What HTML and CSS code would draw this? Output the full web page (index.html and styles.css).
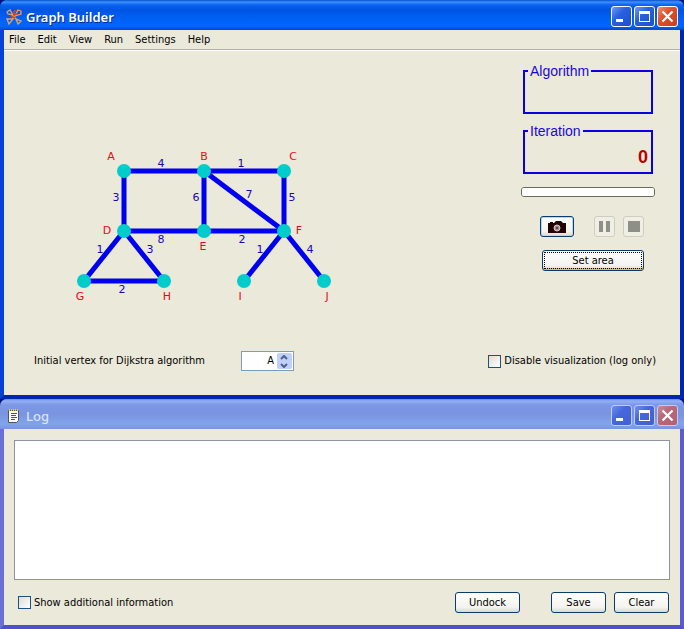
FILE: index.html
```html
<!DOCTYPE html>
<html lang="en">
<head>
  <meta charset="UTF-8" />
  <meta name="viewport" content="width=device-width, initial-scale=1.0"/>
  <title>Graph Builder</title>
  <link rel="stylesheet" href="styles.css">
</head>
<body>
  <section class="window main-window">
    <header class="titlebar">
      <svg class="title-icon" viewBox="0 0 16 16" fill="none" stroke="#e0a468" stroke-width="1.3">
        <path d="M1 3l3-2 3 5-5-1zM15 2l-3-1-3 6 6-2zM1 10l2 5 4-5zM10 10l2 5 3-3zM6 6l5 5M10 6l-4 4"/>
        <path stroke="#d84520" stroke-width="1.6" d="M8 2h3M8 2v4l3-1M5 7l4 2"/>
      </svg>
      <h1>Graph Builder</h1>
      <div class="window-buttons">
        <button class="win-btn" aria-label="Minimize"><svg viewBox="0 0 19 19"><path fill="#fff" d="M4 12h7v3H4z"/></svg></button>
        <button class="win-btn" aria-label="Maximize"><svg viewBox="0 0 19 19"><path fill="#fff" fill-rule="evenodd" d="M4 4h11v11H4zM5 7v7h9V7z"/></svg></button>
        <button class="win-btn close" aria-label="Close"><svg viewBox="0 0 19 19"><path stroke="#fff" stroke-width="2.2" d="M4.500 4.500l10 10M14.500 4.500l-10 10"/></svg></button>
      </div>
    </header>

    <nav class="menu">
      <button>File</button>
      <button>Edit</button>
      <button>View</button>
      <button>Run</button>
      <button>Settings</button>
      <button>Help</button>
    </nav>

    <main class="workspace">
      <svg class="graph" width="280" height="170" viewBox="64 140 280 170">
        <g class="edges">
          <path d="M124 171H284M124 171V231M204 171V231M284 171V231M124 231H284"/>
          <path d="M204 171L284 231M124 231L84 281H164L124 231M284 231L244 281M284 231L324 281"/>
        </g>
        <g class="nodes">
          <circle cx="124" cy="171" r="7"/>
          <circle cx="204" cy="171" r="7"/>
          <circle cx="284" cy="171" r="7"/>
          <circle cx="124" cy="231" r="7"/>
          <circle cx="204" cy="231" r="7"/>
          <circle cx="284" cy="231" r="7"/>
          <circle cx="84" cy="281" r="7"/>
          <circle cx="164" cy="281" r="7"/>
          <circle cx="244" cy="281" r="7"/>
          <circle cx="324" cy="281" r="7"/>
        </g>
        <g class="names">
          <text x="111" y="160">A</text>
          <text x="204" y="160">B</text>
          <text x="293" y="160">C</text>
          <text x="107" y="234">D</text>
          <text x="203" y="250">E</text>
          <text x="299" y="234">F</text>
          <text x="80" y="300">G</text>
          <text x="167" y="300">H</text>
          <text x="240" y="300">I</text>
          <text x="327" y="300">J</text>
        </g>
        <g class="weights">
          <text x="161" y="167">4</text>
          <text x="241" y="167">1</text>
          <text x="116" y="201">3</text>
          <text x="196" y="201">6</text>
          <text x="249" y="198">7</text>
          <text x="292" y="201">5</text>
          <text x="161" y="243">8</text>
          <text x="242" y="243">2</text>
          <text x="100" y="253">1</text>
          <text x="150" y="253">3</text>
          <text x="122" y="293">2</text>
          <text x="260" y="253">1</text>
          <text x="310" y="253">4</text>
        </g>
      </svg>

      <aside class="controls">
        <fieldset>
          <legend>Algorithm</legend>
        </fieldset>
        <fieldset>
          <legend>Iteration</legend>
          <output>0</output>
        </fieldset>
        <progress value="0" max="100" aria-label="Progress"></progress>
        <div class="player">
          <button class="btn camera" aria-label="Take picture">
            <svg width="20" height="14" viewBox="0 0 20 14">
              <path fill="#200404" d="M1 3h2V2h3v1h1l2-2h5l2 2h3v10H1z"/>
              <circle cx="10" cy="8" r="3" fill="#a08c8c" stroke="#d8c8c8"/>
              <circle cx="10" cy="8" r="1" fill="#503030"/>
            </svg>
          </button>
          <button class="btn" aria-label="Pause" disabled>
            <svg width="13" height="13" viewBox="0 0 13 13"><path fill="#8e8f87" d="M1 1h4v11H1zM8 1h4v11H8z"/></svg>
          </button>
          <button class="btn" aria-label="Stop" disabled>
            <svg width="13" height="13" viewBox="0 0 13 13"><path fill="#8e8f87" d="M1 1h12v11H1z"/></svg>
          </button>
        </div>
        <button class="btn set-area">Set area</button>
      </aside>
    </main>

    <div class="options">
      <label for="vertex">Initial vertex for Dijkstra algorithm</label>
      <div class="spinner">
        <input type="text" id="vertex" value="A">
        <div class="arrows">
          <button aria-label="Previous vertex"><svg width="8" height="5" viewBox="0 0 8 5"><path d="M1 4l3-3 3 3"/></svg></button>
          <button aria-label="Next vertex"><svg width="8" height="5" viewBox="0 0 8 5"><path d="M1 1l3 3 3-3"/></svg></button>
        </div>
      </div>
      <label class="check"><input type="checkbox"> Disable visualization (log only)</label>
    </div>
  </section>

  <section class="window log-window">
    <header class="titlebar">
      <svg class="title-icon" viewBox="0 0 16 16">
        <path fill="#fffff4" stroke="#555" d="M2.500 2.500h10v10l-2 2h-8z"/>
        <path stroke="#555" d="M5 5.500h6M5 7.500h5M5 9.500h6M5 11.500h4"/>
        <path stroke="#e0d040" stroke-width="2" stroke-dasharray="1 1" d="M3 2h10"/>
      </svg>
      <h1>Log</h1>
      <div class="window-buttons">
        <button class="win-btn" aria-label="Minimize"><svg viewBox="0 0 19 19"><path fill="#fff" d="M4 12h7v3H4z"/></svg></button>
        <button class="win-btn" aria-label="Maximize"><svg viewBox="0 0 19 19"><path fill="#fff" fill-rule="evenodd" d="M4 4h11v11H4zM5 7v7h9V7z"/></svg></button>
        <button class="win-btn close" aria-label="Close"><svg viewBox="0 0 19 19"><path stroke="#fff" stroke-width="2.2" d="M4.500 4.500l10 10M14.500 4.500l-10 10"/></svg></button>
      </div>
    </header>
    <div class="log-body">
      <textarea aria-label="Log"></textarea>
      <div class="log-footer">
        <label class="check"><input type="checkbox"> Show additional information</label>
        <button class="btn undock">Undock</button>
        <button class="btn">Save</button>
        <button class="btn">Clear</button>
      </div>
    </div>
  </section>
</body>
</html>
```
FILE: styles.css
```css
* {
  box-sizing: border-box;
}

body {
  margin: 0;
  min-height: 100vh;
  display: flex;
  flex-direction: column;
  background-color: #00137f;
  font-family: Tahoma, "DejaVu Sans Condensed", "DejaVu Sans", sans-serif;
  font-size: 11px;
  line-height: 14px;
  color: #000;
}

button, input, textarea {
  font: inherit;
  color: inherit;
}

button {
  padding: 0;
  border: none;
  background: none;
}

/* Windows */
.window {
  display: flex;
  flex-direction: column;
  border: 4px solid #0540d8;
  border-top: none;
  border-color: #0540d8 #0026b0 #0026b0 #0540d8;
  border-radius: 7px 7px 0 0;
  background-color: #ebe9d9;
}

.titlebar {
  display: flex;
  align-items: center;
  height: 30px;
  margin: 0 -4px;
  padding: 3px 6px 0;
  border-radius: 7px 7px 0 0;
  background: linear-gradient(#0a4fc8 0, #3a92ff 2px, #0a62ee 5px, #0054e3 10px, #0062f8 20px, #0066ff 26px, #0048d0 30px);
}

.title-icon {
  width: 16px;
  height: 16px;
  margin-right: 4px;
}

.titlebar h1 {
  flex: 1;
  margin: 0;
  font-family: "Trebuchet MS", "Noto Sans", sans-serif;
  font-size: 13px;
  font-weight: 600;
  color: #fff;
  text-shadow: 1px 1px #0a2a90;
}

.window-buttons {
  display: flex;
  gap: 2px;
}

.win-btn {
  width: 21px;
  height: 21px;
  border: 1px solid #fff;
  border-radius: 3px;
  background: linear-gradient(135deg, #6f9bf5, #2a5fe0 40%, #1c4fd0);
}

.win-btn svg {
  display: block;
}

.win-btn.close {
  background: linear-gradient(135deg, #ee9070, #e0502c 40%, #c8401c);
}

/* Menu */
.menu {
  display: flex;
  gap: 12px;
  height: 20px;
  padding: 0 5px;
  border-bottom: 1px solid #b2b0a2;
  box-shadow: 0 1px #fff;
}

/* Workspace */
.workspace {
  display: flex;
  justify-content: space-between;
  padding: 13px 25px 0 60px;
}

.graph {
  margin-top: 77px;
}

.edges path {
  fill: none;
  stroke: #0000f0;
  stroke-width: 5;
}

.nodes circle {
  fill: #00cccc;
}

.graph text {
  font-family: Verdana, "DejaVu Sans", sans-serif;
  font-size: 11px;
  text-anchor: middle;
}

.names {
  fill: #e80a1a;
}

.weights {
  fill: #1a08b0;
}

.controls {
  width: 134px;
  display: flex;
  flex-direction: column;
}

fieldset {
  height: 51px;
  margin: 0 2px 9px;
  padding: 0 3px;
  border: 2px solid #0a00e0;
}

legend {
  padding: 0 2px;
  font: 14px/16px Arial, "Liberation Sans", sans-serif;
  color: #1a08dc;
}

output {
  display: block;
  text-align: right;
  font: bold 18px/36px Arial, "Liberation Sans", sans-serif;
  color: #b80000;
}

progress {
  appearance: none;
  width: 100%;
  height: 10px;
  margin-top: 4px;
  border: 1px solid #6b6b60;
  border-radius: 3px;
  background-color: #fff;
  overflow: hidden;
}

progress::-webkit-progress-bar {
  background-color: #fff;
}

/* Buttons */
.btn {
  display: flex;
  align-items: center;
  justify-content: center;
  height: 21px;
  border: 1px solid #0a3c6e;
  border-radius: 3px;
  background: linear-gradient(#fff, #f4f3ee 75%, #dcd8cc);
}

.btn:disabled {
  width: 21px;
  border-color: #cfcdbf;
  background: #f0efe5;
}

.player {
  display: flex;
  gap: 8px;
  margin: 19px 11px 0 19px;
}

.camera {
  width: 34px;
  margin-right: auto;
  box-shadow: inset 0 0 0 1px #bcd4f4;
}

.set-area {
  margin: 13px 11px 0 21px;
  outline: 1px dotted #000;
  outline-offset: -3px;
  box-shadow: inset 0 -2px #e8b84c;
}

/* Options */
.options {
  display: flex;
  align-items: center;
  padding: 41px 24px 24px 30px;
}

.spinner {
  display: flex;
  width: 53px;
  height: 20px;
  margin: 0 auto 0 36px;
  padding: 1px;
  border: 1px solid #7f9db9;
  background-color: #fff;
}

.spinner input {
  flex: 1;
  min-width: 0;
  padding: 0 3px;
  border: none;
  text-align: right;
}

.arrows {
  display: flex;
  flex-direction: column;
  width: 15px;
  border-radius: 2px;
  background-color: #c0d0fa;
}

.arrows button {
  flex: 1;
  display: flex;
  align-items: center;
  justify-content: center;
}

.arrows path {
  fill: none;
  stroke: #4d6185;
  stroke-width: 2;
}

.check {
  display: flex;
  align-items: center;
  gap: 3px;
}

.check input {
  appearance: none;
  width: 13px;
  height: 13px;
  margin: 0;
  border: 1px solid #1c5180;
  background: linear-gradient(135deg, #dcdcd7, #fff);
}

/* Log */
.log-window {
  flex: 1;
  border-color: #6a70d8 #5a5cd0 #5050c8 #6a70d8;
}

.log-window .titlebar {
  background: linear-gradient(#6a86dc 0, #93b0f4 2px, #7b98e6 6px, #7a94e0 15px, #82a4ec 25px, #7a94e0 30px);
}

.log-window h1 {
  color: #d8e4f8;
  text-shadow: none;
  font-weight: 500;
}

.log-window .win-btn {
  border-color: #c0ccf4;
  background: linear-gradient(135deg, #7090ec, #4468dc 40%, #4060d4);
}

.log-window .win-btn.close {
  background: linear-gradient(135deg, #c88c9c, #b86878 40%, #b06070);
}

.log-body {
  flex: 1;
  display: flex;
  flex-direction: column;
  padding: 11px 10px 12px;
}

textarea {
  flex: 1;
  min-height: 100px;
  resize: none;
  border: 1px solid #8c92a8;
  background-color: #fff;
}

.log-footer {
  display: flex;
  align-items: center;
  gap: 8px;
  margin-top: 12px;
  padding: 0 1px 0 4px;
}

.log-footer .check {
  margin-right: auto;
}

.log-footer .btn {
  width: 55px;
}

.log-footer .undock {
  width: 65px;
  margin-right: 23px;
}
```
